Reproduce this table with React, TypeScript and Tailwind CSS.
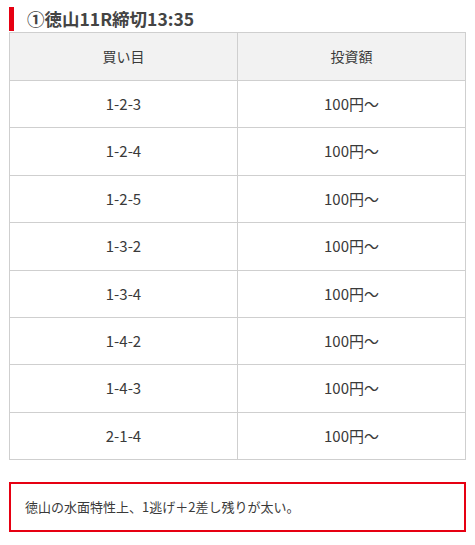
const rows = ["1-2-3", "1-2-4", "1-2-5", "1-3-2", "1-3-4", "1-4-2", "1-4-3", "2-1-4"];

export default function App() {
  return (
    <div
      className="w-[475px] h-[545px] bg-white px-[9px] pt-[7px] text-[#3a3a3a]"
      style={{ fontFamily: '"Noto Sans CJK JP", "Noto Sans", sans-serif' }}
    >
      <h2 className="border-l-[5px] border-[#e60012] pl-[13px] h-[24px] leading-[24px] text-[17.5px] font-bold text-[#444] mb-px">
        ①徳山11R締切13:35
      </h2>

      <table className="w-full border-collapse text-center">
        <thead>
          <tr className="h-[48px] bg-[#f2f2f2]">
            <th className="border border-[#cfcfcf] w-1/2 font-normal text-[14px]">買い目</th>
            <th className="border border-[#cfcfcf] w-1/2 font-normal text-[14px]">投資額</th>
          </tr>
        </thead>
        <tbody>
          {rows.map((r) => (
            <tr key={r} className="h-[47.4px]">
              <td className="border border-[#cfcfcf] text-[15px]">{r}</td>
              <td className="border border-[#cfcfcf] text-[15px]">100円〜</td>
            </tr>
          ))}
        </tbody>
      </table>

      <div className="mt-[22px] h-[50px] border-2 border-[#e60012] pl-[14px] flex items-center text-[13px]">
        徳山の水面特性上、1逃げ＋2差し残りが太い。
      </div>
    </div>
  );
}
